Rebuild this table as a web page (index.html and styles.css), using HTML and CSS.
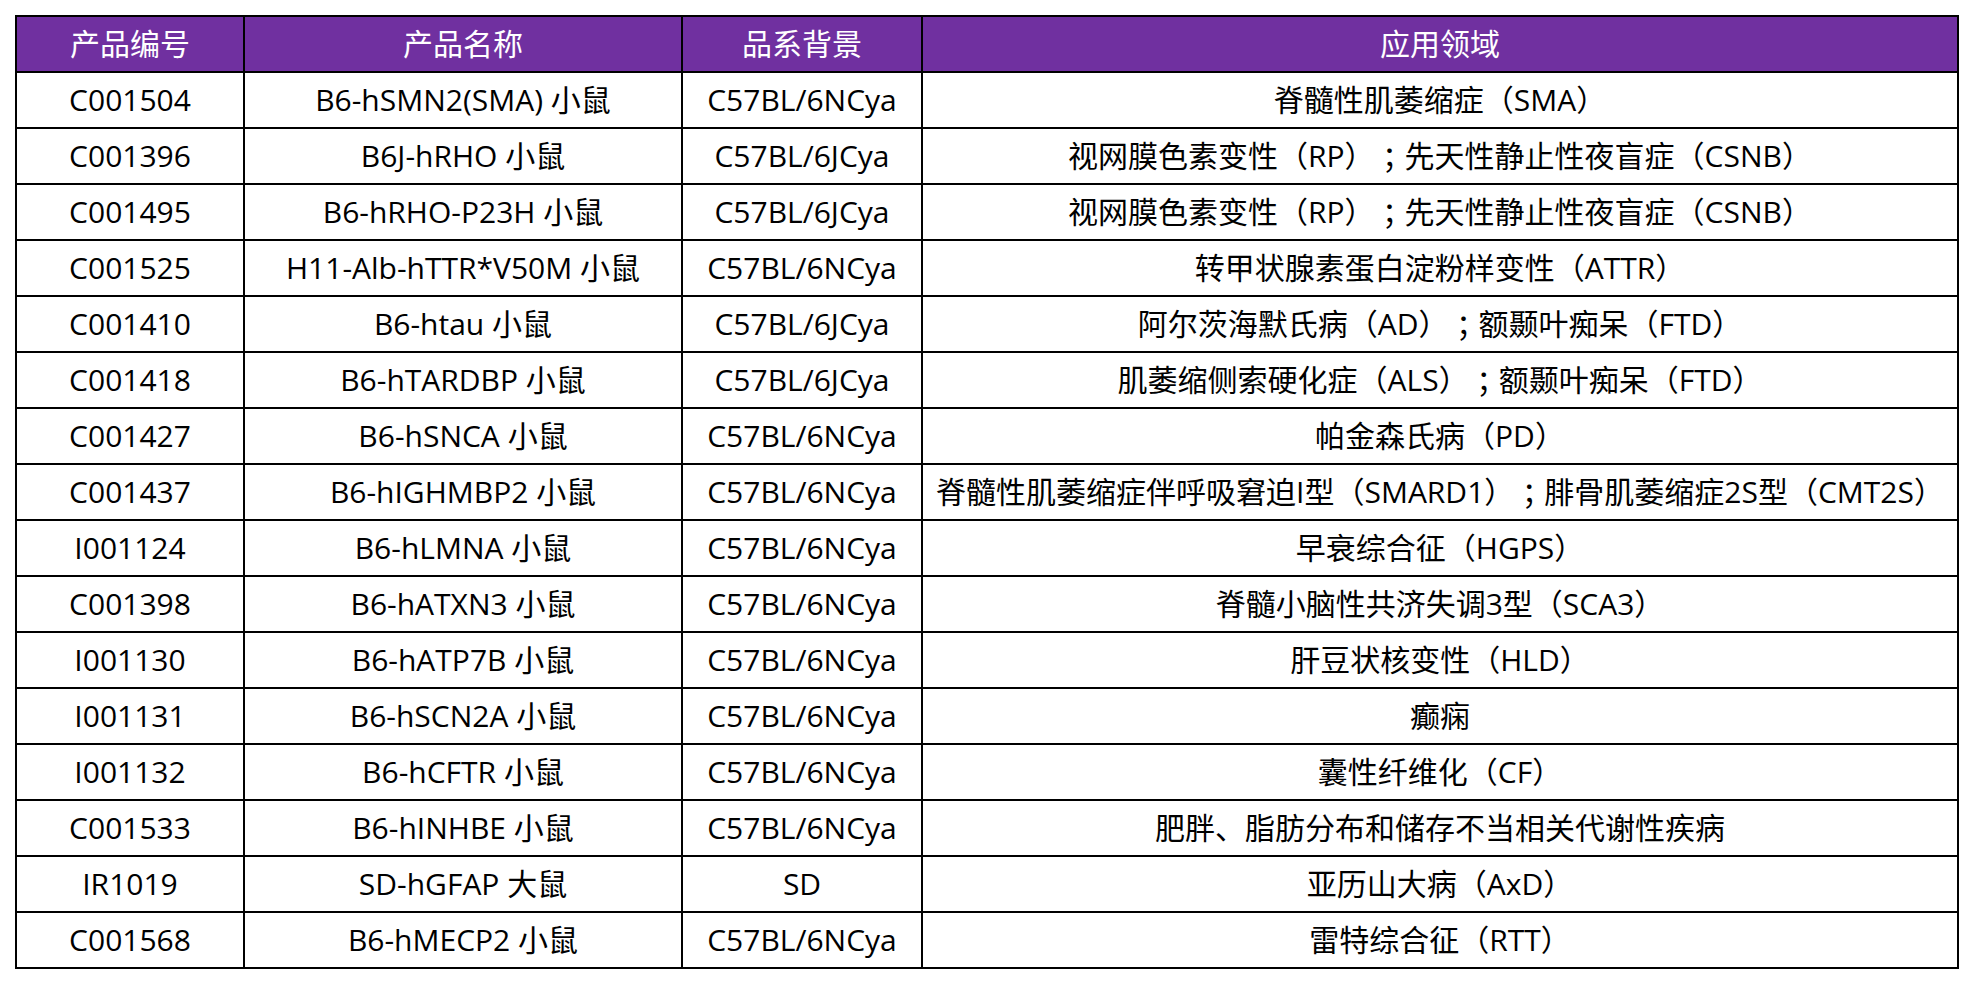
FILE: index.html
```html
<!DOCTYPE html>
<html lang="zh-CN">
<head>
<meta charset="utf-8">
<title>产品列表</title>
<link rel="stylesheet" href="styles.css">
</head>
<body>
<div class="table" role="table">
  <div class="row head" role="row">
    <div class="cell" role="columnheader">产品编号</div>
    <div class="cell" role="columnheader">产品名称</div>
    <div class="cell" role="columnheader">品系背景</div>
    <div class="cell" role="columnheader">应用领域</div>
  </div>
  <div class="row" role="row"><div class="cell">C001504</div><div class="cell">B6-hSMN2(SMA) 小鼠</div><div class="cell">C57BL/6NCya</div><div class="cell">脊髓性肌萎缩症（SMA）</div></div>
  <div class="row" role="row"><div class="cell">C001396</div><div class="cell">B6J-hRHO 小鼠</div><div class="cell">C57BL/6JCya</div><div class="cell">视网膜色素变性（RP）<span class="semi">；</span>先天性静止性夜盲症（CSNB）</div></div>
  <div class="row" role="row"><div class="cell">C001495</div><div class="cell">B6-hRHO-P23H 小鼠</div><div class="cell">C57BL/6JCya</div><div class="cell">视网膜色素变性（RP）<span class="semi">；</span>先天性静止性夜盲症（CSNB）</div></div>
  <div class="row" role="row"><div class="cell">C001525</div><div class="cell">H11-Alb-hTTR*V50M 小鼠</div><div class="cell">C57BL/6NCya</div><div class="cell">转甲状腺素蛋白淀粉样变性（ATTR）</div></div>
  <div class="row" role="row"><div class="cell">C001410</div><div class="cell">B6-htau 小鼠</div><div class="cell">C57BL/6JCya</div><div class="cell">阿尔茨海默氏病（AD）<span class="semi">；</span>额颞叶痴呆（FTD）</div></div>
  <div class="row" role="row"><div class="cell">C001418</div><div class="cell">B6-hTARDBP 小鼠</div><div class="cell">C57BL/6JCya</div><div class="cell">肌萎缩侧索硬化症（ALS）<span class="semi">；</span>额颞叶痴呆（FTD）</div></div>
  <div class="row" role="row"><div class="cell">C001427</div><div class="cell">B6-hSNCA 小鼠</div><div class="cell">C57BL/6NCya</div><div class="cell">帕金森氏病（PD）</div></div>
  <div class="row" role="row"><div class="cell">C001437</div><div class="cell">B6-hIGHMBP2 小鼠</div><div class="cell">C57BL/6NCya</div><div class="cell">脊髓性肌萎缩症伴呼吸窘迫I型（SMARD1）<span class="semi">；</span>腓骨肌萎缩症2S型（CMT2S）</div></div>
  <div class="row" role="row"><div class="cell">I001124</div><div class="cell">B6-hLMNA 小鼠</div><div class="cell">C57BL/6NCya</div><div class="cell">早衰综合征（HGPS）</div></div>
  <div class="row" role="row"><div class="cell">C001398</div><div class="cell">B6-hATXN3 小鼠</div><div class="cell">C57BL/6NCya</div><div class="cell">脊髓小脑性共济失调3型（SCA3）</div></div>
  <div class="row" role="row"><div class="cell">I001130</div><div class="cell">B6-hATP7B 小鼠</div><div class="cell">C57BL/6NCya</div><div class="cell">肝豆状核变性（HLD）</div></div>
  <div class="row" role="row"><div class="cell">I001131</div><div class="cell">B6-hSCN2A 小鼠</div><div class="cell">C57BL/6NCya</div><div class="cell">癫痫</div></div>
  <div class="row" role="row"><div class="cell">I001132</div><div class="cell">B6-hCFTR 小鼠</div><div class="cell">C57BL/6NCya</div><div class="cell">囊性纤维化（CF）</div></div>
  <div class="row" role="row"><div class="cell">C001533</div><div class="cell">B6-hINHBE 小鼠</div><div class="cell">C57BL/6NCya</div><div class="cell">肥胖、脂肪分布和储存不当相关代谢性疾病</div></div>
  <div class="row" role="row"><div class="cell">IR1019</div><div class="cell">SD-hGFAP 大鼠</div><div class="cell">SD</div><div class="cell">亚历山大病（AxD）</div></div>
  <div class="row" role="row"><div class="cell">C001568</div><div class="cell">B6-hMECP2 小鼠</div><div class="cell">C57BL/6NCya</div><div class="cell">雷特综合征（RTT）</div></div>
</div>
</body>
</html>
```

FILE: styles.css
```css
html, body {
  margin: 0;
  background: #ffffff;
}

body {
  padding: 15px;
  font-family: "Open Sans", "Noto Sans CJK SC", sans-serif;
  font-size: 30px;
  color: #000000;
}

.table {
  display: grid;
  width: max-content;
  border-top: 2px solid #000;
  border-left: 2px solid #000;
}

.row {
  display: grid;
  grid-template-columns: 228px 438px 240px 1036px;
}

.cell {
  box-sizing: border-box;
  height: 56px;
  border-right: 2px solid #000;
  border-bottom: 2px solid #000;
  display: flex;
  align-items: center;
  justify-content: center;
  white-space: pre;
  line-height: 1;
}

.semi {
  font-family: "Noto Sans CJK TC", "Noto Sans CJK SC", sans-serif;
}

.head .cell {
  background: #7030a0;
  color: #ffffff;
}
```
